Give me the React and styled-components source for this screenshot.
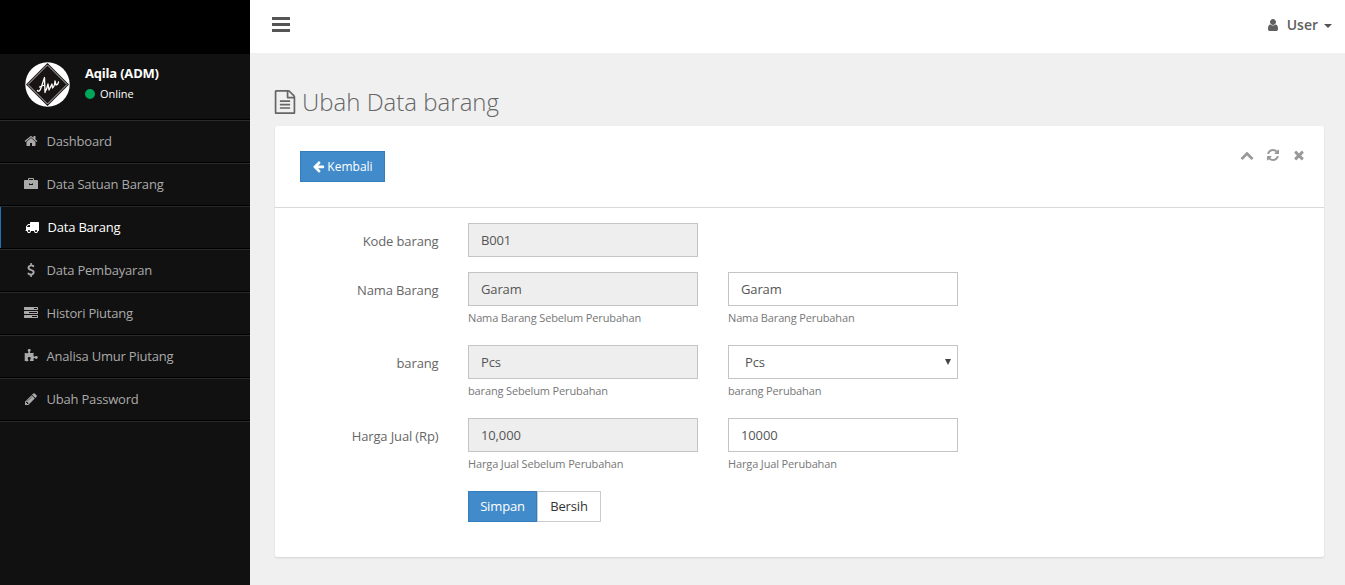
import React from "react";
import styled, { createGlobalStyle, css } from "styled-components";

const Global = createGlobalStyle`
  * { box-sizing: border-box; }
  html, body { margin: 0; background: #f0f0f0; }
  body { font-family: "Open Sans", sans-serif; font-size: 13px; line-height: 20px; color: #555; overflow: hidden; }
  button, input { font-family: inherit; }
`;

const paths = {
  home: "M1472 992v480q0 26-19 45t-45 19h-384v-384h-256v384h-384q-26 0-45-19t-19-45v-480q0-1 .5-3t.5-3l575-474 575 474q1 2 1 6zm223-69l-62 74q-8 9-21 11h-3q-13 0-21-7l-692-577-692 577q-12 8-24 7-13-2-21-11l-62-74q-8-10-7-23.5t11-21.5l719-599q32-26 76-26t76 26l244 204v-195q0-14 9-23t23-9h192q14 0 23 9t9 23v408l219 182q10 8 11 21.5t-7 23.5z",
  briefcase: "M640 384h512v-128h-512zM512 384v-128q0-128 128-128h512q128 0 128 128v128h384q128 0 128 128v960q0 64-64 64h-1664q-64 0-64-64v-960q0-128 128-128zM640 832v128q0 64 64 64h384q64 0 64-64v-128h-128v64h-256v-64z",
  truck: "M640 1408q0-52-38-90t-90-38-90 38-38 90 38 90 90 38 90-38 38-90zm-384-512h384v-256h-158q-13 0-22 9l-195 195q-9 9-9 22v30zm1280 512q0-52-38-90t-90-38-90 38-38 90 38 90 90 38 90-38 38-90zm256-1088v1024q0 15-4 26.5t-13.5 18.5-16.5 11.5-23.5 6-22.5 2-25.5 0-22.5-.5q0 106-75 181t-181 75-181-75-75-181h-384q0 106-75 181t-181 75-181-75-75-181h-64q-3 0-22.5.5t-25.5 0-22.5-2-23.5-6-16.5-11.5-13.5-18.5-4-26.5q0-26 19-45t45-19v-320q0-8-.5-35t0-38 2.5-34.5 6.5-37 14-30.5 22.5-30l198-198q19-19 50.5-32t58.5-13h160v-192q0-26 19-45t45-19h1024q26 0 45 19t19 45z",
  dollar: "M1362 1185q0 153-99.5 263.5t-258.5 136.5v175q0 14-9 23t-23 9h-135q-13 0-22.5-9.5t-9.5-22.5v-175q-66-9-127.5-31t-101.5-44.5-74-48-46.5-37.5-17.5-18q-17-21-2-41l103-135q7-10 23-12 15-2 24 9l2 2q113 99 243 125 37 8 74 8 81 0 142.5-43t61.5-122q0-28-15-53t-33.5-42-58.5-37.5-66-32-80-32.5q-39-16-61.5-25t-61.5-26.5-62.5-31-56.5-35.5-53.5-42.5-43.5-49-35.5-58-21-66.5-8.5-78q0-138 98-242t255-134v-180q0-13 9.5-22.5t22.5-9.5h135q14 0 23 9t9 23v176q57 6 110.5 23t87 33.5 63.5 37.5 39 29 15 14q17 18 5 38l-81 146q-8 15-23 16-14 3-27-7-3-3-14.5-12t-39-26.5-58.5-32-74.5-26-85.5-11.5q-95 0-155 43t-60 111q0 26 8.5 48t29.5 41.5 39.5 33 56 31 60.5 27 70 27.5q53 20 81 31.5t76 35 75.5 42.5 62 50 53 63.5 31.5 76.5 13 94z",
  tasks: "M1024 1408h640v-128h-640v128zm-384-512h1024v-128h-1024v128zm640-512h384v-128h-384v128zm512 832v256q0 26-19 45t-45 19h-1664q-26 0-45-19t-19-45v-256q0-26 19-45t45-19h1664q26 0 45 19t19 45zm0-512v256q0 26-19 45t-45 19h-1664q-26 0-45-19t-19-45v-256q0-26 19-45t45-19h1664q26 0 45 19t19 45zm0-512v256q0 26-19 45t-45 19h-1664q-26 0-45-19t-19-45v-256q0-26 19-45t45-19h1664q26 0 45 19t19 45z",
  puzzle: "M1755 1083q0 81-44.5 135t-123.5 54q-41 0-77.5-17.5t-59-38-56.5-38-71-17.5q-110 0-110 124 0 39 16 115t15 115v5q-22 0-33 1-34 3-97.5 11.5t-115.5 13.5-98 5q-61 0-103-26.5t-42-83.5q0-37 17.5-71t38-56.5 38-59 17.5-77.5q0-79-54-123.5t-135-44.5q-84 0-143 45.5t-59 127.5q0 43 15 83t33.5 64.5 33.5 53 15 50.5q0 45-46 89-37 35-117 35-95 0-245-24-9-2-27.5-4t-27.5-4l-13-2q-1 0-3-1-2 0-2-1v-1024q2 1 17.5 3.5t34 5 21.5 3.5q150 24 245 24 80 0 117-35 46-44 46-89 0-22-15-50.5t-33.5-53-33.5-64.5-15-83q0-82 59-127.5t144-45.5q80 0 134 44.5t54 123.5q0 41-17.5 77.5t-38 59-38 56.5-17.5 71q0 57 42 83.5t103 26.5q64 0 180-15t163-17v2q-1 2-3.5 17.5t-5 34-3.5 21.5q-24 150-24 245 0 80 35 117 44 46 89 46 22 0 50.5-15t53-33.5 64.5-33.5 83-15q82 0 127.5 59t45.5 143z",
  pencil: "M491 1536l91-91-235-235-91 91v107h128v128h107zm523-928q0-22-22-22-10 0-17 7l-542 542q-7 7-7 17 0 22 22 22 10 0 17-7l542-542q7-7 7-17zm-54-192l416 416-832 832h-416v-416zm683 96q0 53-37 90l-166 166-416-416 166-165q36-38 90-38 53 0 91 38l235 234q37 39 37 91z",
  file: "M1596 380q28 28 48 76t20 88v1152q0 40-28 68t-68 28h-1344q-40 0-68-28t-28-68v-1600q0-40 28-68t68-28h896q40 0 88 20t76 48zm-444-244v376h376q-10-29-22-41l-313-313q-12-12-41-22zm384 1528v-1024h-416q-40 0-68-28t-28-68v-416h-768v1536h1280zm-1024-864q0-14 9-23t23-9h704q14 0 23 9t9 23v64q0 14-9 23t-23 9h-704q-14 0-23-9t-9-23v-64zm736 224q14 0 23 9t9 23v64q0 14-9 23t-23 9h-704q-14 0-23-9t-9-23v-64q0-14 9-23t23-9h704zm0 256q14 0 23 9t9 23v64q0 14-9 23t-23 9h-704q-14 0-23-9t-9-23v-64q0-14 9-23t23-9h704z",
  refresh: "M1639 1056q0 5-1 7-64 268-268 434.5t-478 166.5q-146 0-282.5-55t-243.5-157l-129 129q-19 19-45 19t-45-19-19-45v-448q0-26 19-45t45-19h448q26 0 45 19t19 45-19 45l-137 137q71 66 161 102t187 36q134 0 250-65t186-179q11-17 53-117 8-23 30-23h192q13 0 22.5 9.5t9.5 22.5zm25-800v448q0 26-19 45t-45 19h-448q-26 0-45-19t-19-45 19-45l138-138q-148-137-349-137-134 0-250 65t-186 179q-11 17-53 117-8 23-30 23h-199q-13 0-22.5-9.5t-9.5-22.5v-7q65-268 270-434.5t480-166.5q146 0 284 55.5t245 156.5l130-129q19-19 45-19t45 19 19 45z",
  times: "M1490 1322q0 40-28 68l-136 136q-28 28-68 28t-68-28l-294-294-294 294q-28 28-68 28t-68-28l-136-136q-28-28-28-68t28-68l294-294-294-294q-28-28-28-68t28-68l136-136q28-28 68-28t68 28l294 294 294-294q28-28 68-28t68 28l136 136q28 28 28 68t-28 68l-294 294 294 294q28 28 28 68z",
  up: "M1683 1331l-166 165q-19 19-45 19t-45-19l-531-531-531 531q-19 19-45 19t-45-19l-166-165q-19-19-19-45.5t19-45.5l742-741q19-19 45-19t45 19l742 741q19 19 19 45.5t-19 45.5z",
  user: "M1536 1399q0 109-62.5 187t-150.5 78h-854q-88 0-150.5-78t-62.5-187q0-85 8.5-160.5t31.5-152 58.5-131 94-89 134.5-34.5q131 128 313 128t313-128q76 0 134.5 34.5t94 89 58.5 131 31.5 152 8.5 160.5zm-256-887q0 159-112.5 271.5t-271.5 112.5-271.5-112.5-112.5-271.5 112.5-271.5 271.5-112.5 271.5 112.5 112.5 271.5z",
  left: "M1664 896v128q0 53-32.5 90.5t-84.5 37.5h-704l293 294q38 36 38 90t-38 90l-75 76q-37 37-90 37-52 0-91-37l-651-652q-37-37-37-90 0-52 37-91l651-650q38-38 91-38 52 0 90 38l75 74q38 38 38 91t-38 91l-293 293h704q52 0 84.5 37.5t32.5 90.5z",
};

const Svg = styled.svg`
  display: block;
  flex: none;
  fill: currentColor;
`;
const Icon = ({ name, size = 14 }) => (
  <Svg width={size} height={size} viewBox="0 0 1792 1792"><path fillRule={name === "briefcase" ? "evenodd" : "nonzero"} d={paths[name]} /></Svg>
);

const Page = styled.div`
  display: flex;
  height: 585px;
`;
const Sidebar = styled.aside`
  width: 250px;
  background: #111;
  flex: none;
`;
const Brand = styled.div`
  height: 54px;
  background: #000;
`;
const Profile = styled.div`
  display: flex;
  height: 65px;
  padding: 8px 0 0 25px;
  gap: 15px;
  color: #fff;
`;
const ProfileText = styled.div`
  padding-top: 1px;
`;
const ProfileName = styled.div`
  font-size: 13px;
  letter-spacing: -0.2px;
  font-weight: 700;
  line-height: 20px;
`;
const Status = styled.div`
  display: flex;
  align-items: center;
  gap: 5px;
  font-size: 11px;
  line-height: 22px;
`;
const Dot = styled.span`
  width: 10px;
  height: 10px;
  border-radius: 50%;
  background: #00a65a;
`;
const Menu = styled.nav`
  border-bottom: 1px solid #000;
  box-shadow: 0 1px #2a2a2a;
  letter-spacing: -0.2px;
`;
const MenuItem = styled.a`
  display: flex;
  align-items: center;
  gap: 8.5px;
  height: 43px;
  padding-left: 24px;
  border-top: 1px solid #000;
  box-shadow: inset 0 1px #2a2a2a;
  color: #aaa;
  ${(p) => p.$active && css`
    color: #fff;
    padding-left: 25px;
    background: linear-gradient(to right, #1f71b8 1px, transparent 1px);
  `}
`;
const Main = styled.main`
  flex: 1;
  min-width: 0;
`;
const Topbar = styled.header`
  display: flex;
  justify-content: space-between;
  height: 53px;
  padding: 16px 13px 0 22px;
  background: #fff;
`;
const Toggle = styled.button`
  display: block;
  padding: 0;
  height: 18px;
  border: 0;
  background: none;
  color: #555;
`;
const UserMenu = styled.div`
  display: flex;
  align-items: center;
  height: 18px;
  font-size: 14px;
  font-weight: 600;
  color: #606060;
`;
const UserName = styled.span`
  margin: 0 6px 0 7px;
`;
const Caret = styled.span`
  border: 4px solid transparent;
  border-top-color: #555;
  border-bottom: 0;
  margin-top: 2px;
`;
const Content = styled.section`
  padding: 28px 21px 0 25px;
`;
const Title = styled.h1`
  display: flex;
  align-items: center;
  margin: 0 0 3px -2px;
  height: 42px;
  gap: 5px;
  font-size: 24px;
  line-height: 36px;
  font-weight: 300;
  color: #666;
`;
const Panel = styled.div`
  height: 431px;
  background: #fff;
  border-radius: 2px;
  box-shadow: 0 1px 2px rgba(0, 0, 0, 0.12);
`;
const PanelHead = styled.div`
  display: flex;
  justify-content: space-between;
  height: 82px;
  padding: 25px 18px 0 25px;
  border-bottom: 1px solid #d9d9d9;
`;
const Tools = styled.div`
  display: flex;
  height: 8px;
  align-items: center;
  gap: 12px;
  color: #999;
`;
const Button = styled.button`
  display: flex;
  align-items: center;
  justify-content: center;
  gap: 2px;
  width: ${(p) => p.$width}px;
  height: 31px;
  padding: 0 0 ${(p) => (p.$size ? 0 : 2)}px;
  letter-spacing: ${(p) => (p.$size ? 0 : -0.15)}px;
  font-size: ${(p) => p.$size || 13}px;
  border: 1px solid ${(p) => (p.$primary ? "#357ebd" : "#ccc")};
  background: ${(p) => (p.$primary ? "#428bca" : "#fff")};
  color: ${(p) => (p.$primary ? "#fff" : "#333")};
`;
const Form = styled.form`
  padding: 15px 0 0;
`;
const Row = styled.div`
  display: grid;
  grid-template-columns: 164px 230px 230px;
  column-gap: 30px;
  height: ${(p) => p.$height || 73}px;
`;
const Label = styled.label`
  padding-top: 8px;
  padding-right: 0.5px;
  text-align: right;
  letter-spacing: -0.13px;
  color: #666;
`;
const Field = styled.div`
  margin-left: -1px;
  width: 230px;
`;
const controlStyle = css`
  width: 230px;
  height: 34px;
  border: 1px solid #c4c4c4;
  color: #555;
  font-size: 13px;
  letter-spacing: -0.13px;
`;
const Input = styled.input`
  ${controlStyle}
  display: block;
  padding: 0 12px;
  border-radius: 0;
  background: ${(p) => (p.readOnly ? "#eee" : "#fff")};
`;
const Select = styled.div`
  ${controlStyle}
  display: flex;
  align-items: center;
  justify-content: space-between;
  padding: 0 6px 0 16px;
`;
const Arrow = styled.span`
  border: 3px solid transparent;
  border-top: 6px solid #444;
  border-bottom: 0;
`;
const Help = styled.div`
  font-size: 11px;
  letter-spacing: -0.14px;
  line-height: 16px;
  padding-top: 4px;
  color: #777;
`;
const Actions = styled.div`
  display: flex;
  padding-left: 193px;
`;

const menu = [
  ["home", "Dashboard"],
  ["briefcase", "Data Satuan Barang"],
  ["truck", "Data Barang"],
  ["dollar", "Data Pembayaran"],
  ["tasks", "Histori Piutang"],
  ["puzzle", "Analisa Umur Piutang"],
  ["pencil", "Ubah Password"],
];

const Avatar = () => (
  <Svg width="45" height="45" viewBox="0 0 45 45">
    <circle cx="22.5" cy="22.5" r="22.2" fill="#fff" />
    <path d="M22.5 1L44 22.5 22.5 44 1 22.5z" fill="#171413" />
    <path d="M22.5 3L42 22.5 22.5 42 3 22.5z" fill="none" stroke="#bbb" strokeWidth="1" />
    <path d="M12.5 28.5q2 2.5 4-4l3-9 .5 15M14.500 25l5-2M20 30q2-3 3-8l1 6 3-6 .5 4q2-1 2.500-7l1 4q2 0 2.500-3" fill="none" stroke="#fff" strokeWidth="1.3" strokeLinecap="round" strokeLinejoin="round" />
  </Svg>
);

export default function App() {
  return (
    <Page>
      <Global />
      <Sidebar>
        <Brand />
        <Profile>
          <Avatar />
          <ProfileText>
            <ProfileName>Aqila (ADM)</ProfileName>
            <Status><Dot />Online</Status>
          </ProfileText>
        </Profile>
        <Menu>
          {menu.map(([icon, label]) => (
            <MenuItem key={label} $active={icon === "truck"}><Icon name={icon} />{label}</MenuItem>
          ))}
        </Menu>
      </Sidebar>
      <Main>
        <Topbar>
          <Toggle aria-label="Menu">
            <Svg width="18" height="18" viewBox="0 0 18 18"><path d="M0 1h18v3H0zM0 7h18v3H0zM0 13h18v3H0z" /></Svg>
          </Toggle>
          <UserMenu><Icon name="user" /><UserName>User</UserName><Caret /></UserMenu>
        </Topbar>
        <Content>
          <Title><Icon name="file" size={24} />Ubah Data barang</Title>
          <Panel>
            <PanelHead>
              <Button $primary $width={85} $size={12}><Icon name="left" size={13} />Kembali</Button>
              <Tools><Icon name="up" /><Icon name="refresh" /><Icon name="times" /></Tools>
            </PanelHead>
            <Form>
              <Row $height={49}>
                <Label>Kode barang</Label>
                <Field><Input readOnly value="B001" /></Field>
              </Row>
              <Row>
                <Label>Nama Barang</Label>
                <Field><Input readOnly value="Garam" /><Help>Nama Barang Sebelum Perubahan</Help></Field>
                <Field><Input defaultValue="Garam" /><Help>Nama Barang Perubahan</Help></Field>
              </Row>
              <Row>
                <Label>barang</Label>
                <Field><Input readOnly value="Pcs" /><Help>barang Sebelum Perubahan</Help></Field>
                <Field><Select>Pcs<Arrow /></Select><Help>barang Perubahan</Help></Field>
              </Row>
              <Row>
                <Label>Harga Jual (Rp)</Label>
                <Field><Input readOnly value="10,000" /><Help>Harga Jual Sebelum Perubahan</Help></Field>
                <Field><Input defaultValue="10000" /><Help>Harga Jual Perubahan</Help></Field>
              </Row>
              <Actions>
                <Button type="button" $primary $width={69}>Simpan</Button>
                <Button type="button" $width={64}>Bersih</Button>
              </Actions>
            </Form>
          </Panel>
        </Content>
      </Main>
    </Page>
  );
}
